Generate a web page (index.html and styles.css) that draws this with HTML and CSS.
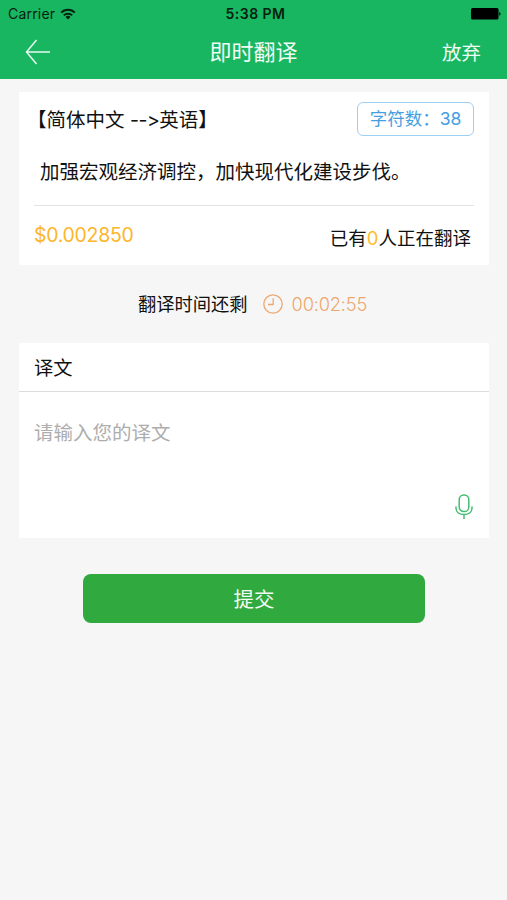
FILE: index.html
```html
<!DOCTYPE html>
<html lang="zh-CN">

<head>
    <meta charset="UTF-8">
    <meta name="viewport" content="width=device-width, initial-scale=1.0">
    <title>即时翻译</title>
    <link rel="stylesheet" href="styles.css">
</head>

<body>

    <header class="header">
        <div class="status-bar">
            <div class="carrier">
                <span>Carrier</span>
                <svg width="16" height="12" viewBox="0 0 16 12" fill="none" stroke="#06210f" stroke-width="2">
                    <path d="M1.2 4.600a9.600 9.600 0 0 1 13.600 0" />
                    <path d="M3.8 7.400a5.900 5.900 0 0 1 8.400 0" />
                    <path d="M8 11.500L5.500 9a3.600 3.600 0 0 1 5 0z" fill="#06210f" stroke="none" />
                </svg>
            </div>
            <span class="time">5:38 PM</span>
            <svg class="battery" width="30" height="12" viewBox="0 0 30 12">
                <rect x="0" y="0" width="27.5" height="11.5" rx="1.5" />
                <path d="M28.2 4c1.8.5 1.8 3.2 0 3.7z" />
            </svg>
        </div>
        <div class="nav-bar">
            <a class="back">
                <svg width="26" height="26" viewBox="0 0 26 26" fill="none" stroke="#e6faee" stroke-width="1.5">
                    <path d="M11.5 1L1.5 13l10 12M1.5 13H25" />
                </svg>
            </a>
            <h1>即时翻译</h1>
            <a class="quit">放弃</a>
        </div>
    </header>

    <main>
        <section class="card source">
            <div class="source-top">
                <span class="language">【简体中文 <span class="arrow">--&gt;</span>英语】</span>
                <span class="count">字符数：<span class="number">38</span></span>
            </div>
            <p class="source-text">加强宏观经济调控，加快现代化建设步伐。</p>
            <div class="source-bottom">
                <span class="price">$0.002850</span>
                <span class="people">已有<em>0</em>人正在翻译</span>
            </div>
        </section>

        <div class="timer">
            <span>翻译时间还剩</span>
            <svg width="20" height="20" viewBox="0 0 20 20" fill="none" stroke="#eda86f" stroke-width="1.3">
                <circle cx="10" cy="10" r="9.2" />
                <path d="M10.2 4.3v6.2H5" />
            </svg>
            <span class="left">00:02:55</span>
        </div>

        <section class="card answer">
            <h2>译文</h2>
            <div class="answer-body">
                <p class="placeholder">请输入您的译文</p>
                <svg class="mic" width="18" height="26" viewBox="0 0 18 26" fill="none" stroke="#45bd72" stroke-width="1.5">
                    <rect x="4.2" y="1" width="9.6" height="16.6" rx="4.6" />
                    <path d="M1 12.500v1.500c0 4.300 3.500 6.500 8 6.500s8-2.200 8-6.500v-1.500M9 20.500v4.500" />
                </svg>
            </div>
        </section>

        <button class="submit">提交</button>
    </main>

</body>

</html>
```
FILE: styles.css
```css
* {
    box-sizing: border-box;
}

body {
    margin: 0;
    min-height: 100vh;
    background-color: #f6f6f6;
    color: #111;
    font-family: Inter, 'Noto Sans CJK SC', sans-serif;
    font-size: 19.5px;
}

h1,
h2,
p {
    margin: 0;
    font-weight: normal;
}

.header {
    height: 79px;
    background-color: #19b661;
}

.status-bar {
    display: grid;
    grid-template-columns: 1fr auto 1fr;
    align-items: center;
    height: 27px;
    padding: 0 6px 0 8px;
    color: #06210f;
    font-size: 14px;
    line-height: 27px;
}

.carrier {
    display: flex;
    align-items: center;
    gap: 5px;
    letter-spacing: 0.2px;
}

.time {
    padding-left: 2px;
    font-weight: 600;
    letter-spacing: 0.45px;
}

.battery {
    justify-self: end;
}

.nav-bar {
    display: grid;
    grid-template-columns: 1fr auto 1fr;
    grid-template-rows: 50px;
    align-items: center;
    height: 50px;
    padding: 0 26px 0 25px;
    color: #effcf4;
    line-height: 50px;
}

.back {
    display: flex;
}

.nav-bar h1 {
    padding-left: 1px;
    font-size: 22px;
}

.quit {
    justify-self: end;
    padding-top: 2px;
}

main {
    padding: 13px 18px 0 19px;
}

.card {
    background-color: #fff;
}

.source {
    height: 173px;
    padding: 10px 15px 0;
}

.source-top {
    display: flex;
    justify-content: space-between;
    height: 34px;
    line-height: 36px;
}

.language {
    margin-left: -7px;
}

.arrow {
    letter-spacing: -0.5px;
}

.count {
    width: 117px;
    border: 1px solid #9bd0f3;
    border-radius: 6px;
    color: #459edf;
    font-size: 17.5px;
    line-height: 32px;
    text-align: center;
}

.source-text {
    height: 70px;
    padding-left: 6px;
    border-bottom: 1px solid #e2e2e2;
    line-height: 72px;
}

.source-bottom {
    display: flex;
    justify-content: space-between;
    padding-right: 3px;
}

.price {
    color: #fcb62b;
    letter-spacing: -0.3px;
    line-height: 58px;
}

.people {
    font-size: 18.5px;
    line-height: 64px;
}

.people em {
    color: #fdbd2b;
    font-style: normal;
}

.timer {
    display: flex;
    align-items: center;
    justify-content: center;
    height: 78px;
    padding-right: 3px;
    font-size: 18.3px;
    line-height: 28px;
}

.timer svg {
    margin: 0 9px 0 15px;
}

.left {
    color: #eda86f;
    font-weight: 300;
    letter-spacing: -0.2px;
}

.answer {
    height: 195px;
}

.answer h2 {
    height: 49px;
    padding-left: 15px;
    border-bottom: 1px solid #dcdcdc;
    font-size: 19.3px;
    line-height: 51px;
}

.answer-body {
    display: flex;
    justify-content: space-between;
    height: 146px;
    padding: 27px 16px 18px 15px;
}

.placeholder {
    color: #adadad;
    line-height: 28px;
}

.mic {
    align-self: flex-end;
}

.submit {
    display: block;
    width: 342px;
    height: 49px;
    margin: 36px auto 0;
    padding: 2px 0 0;
    border: none;
    border-radius: 8px;
    background-color: #30a93f;
    color: #f2fbf3;
    font-family: inherit;
    font-size: 20.5px;
    line-height: 47px;
}
```
